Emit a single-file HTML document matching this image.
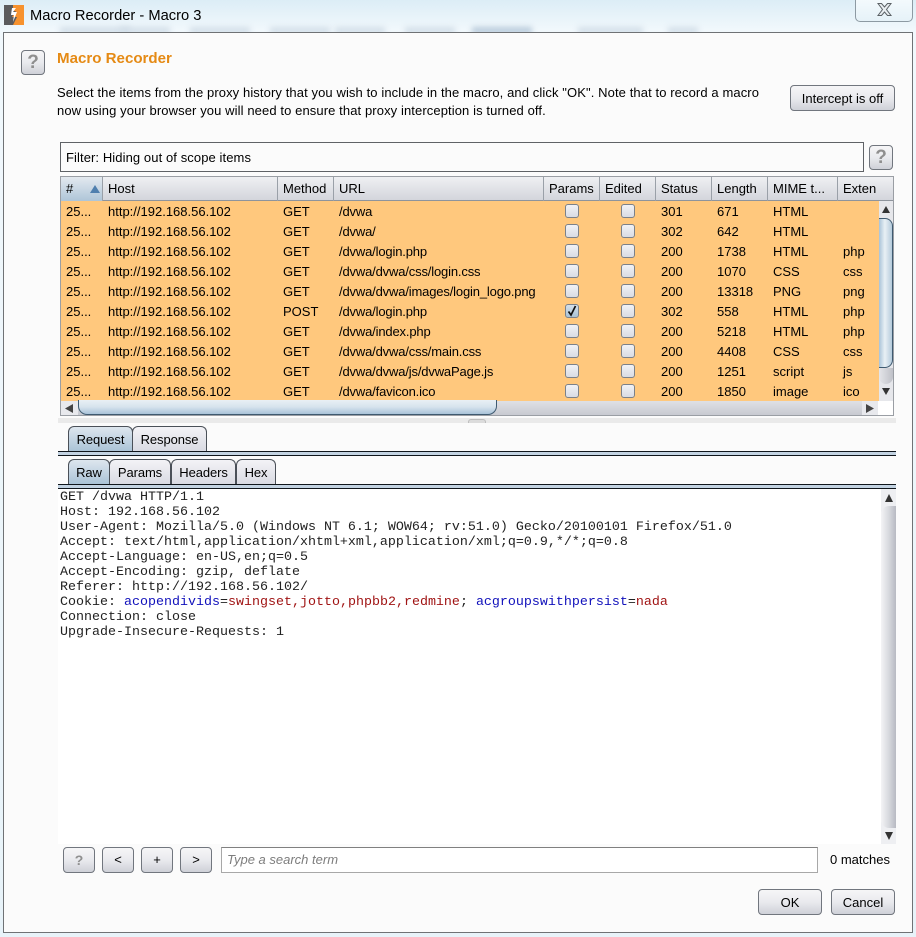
<!DOCTYPE html>
<html><head><meta charset="utf-8"><title>Macro Recorder - Macro 3</title>
<style>
*{box-sizing:border-box}
html,body{margin:0;padding:0}
body{width:916px;height:937px;overflow:hidden;position:relative;background:linear-gradient(#dcedf6 0,#f1f8fc 30px,#e8f3f9 100%);font:13px "Liberation Sans",sans-serif;color:#000}
.a{position:absolute;white-space:nowrap}
.blur{position:absolute;background:#d3dfe9;filter:blur(3px);height:7px}
.btn{position:absolute;border:1px solid #71767e;border-radius:4px;background:linear-gradient(#f6f6f7 0,#e9eaee 50%,#cfd1d8 100%);text-align:center;color:#000;white-space:nowrap}
.q{color:#8f8f8f;font-weight:bold}
.hc{position:absolute;top:0;height:24px;border-right:1px solid #9aa0a8;line-height:23px;padding-left:5px;white-space:nowrap;overflow:hidden}
.row{position:absolute;left:0;height:20px;width:819px;line-height:22px}
.row span{position:absolute;top:0;white-space:nowrap}
.row span.u{letter-spacing:-.16px}
.cb{position:absolute;top:3px;width:14px;height:14px;border:1px solid #7b8189;border-radius:3px;background:linear-gradient(#f1f2f5,#d9dce4)}
.tab{position:absolute;height:26px;border:1px solid #4a5058;border-bottom:0;border-radius:6px 6px 0 0;background:linear-gradient(#f3f3f6,#d8dae2);text-align:center;line-height:25px;letter-spacing:-.1px}
.tab.on{background:linear-gradient(#dde6ee,#a9c2d6)}
.ln{position:absolute;left:58px;width:838px}
.mono{position:absolute;left:60px;font:13.33px/15px "Liberation Mono",monospace;color:#222;white-space:pre}
.sb{position:absolute}
</style></head><body>
<div class="blur" style="left:60px;top:27px;width:70px"></div>
<div class="blur" style="left:120px;top:27px;width:50px"></div>
<div class="blur" style="left:190px;top:27px;width:60px"></div>
<div class="blur" style="left:270px;top:27px;width:60px"></div>
<div class="blur" style="left:335px;top:27px;width:50px"></div>
<div class="blur" style="left:405px;top:27px;width:50px"></div>
<div class="blur" style="left:472px;top:27px;width:60px;background:#b9cbdb"></div>
<div class="blur" style="left:578px;top:27px;width:65px"></div>
<div class="blur" style="left:668px;top:27px;width:30px"></div>

<svg class="a" style="left:4px;top:5px" width="20" height="20" viewBox="0 0 20 20"><rect width="20" height="20" fill="#5b5b5d"/><path d="M9 0H20V20H9L13 12H8L12 6H9Z" fill="#f7922e"/><path d="M8 3L12 3 9 7 13 7 9 17 10 10 7 10Z" fill="#fff"/></svg>
<div class="a" style="left:30px;top:7px;font-size:14.7px;line-height:18px;color:#000">Macro Recorder - Macro 3</div>

<div class="a" style="left:855px;top:-2px;width:58px;height:24px;border:1px solid #8d9aa3;border-radius:0 0 5px 5px;background:linear-gradient(#f4fafd,#e6f2f8)"></div>
<svg class="a" style="left:876px;top:2px" width="17" height="15" viewBox="0 0 17 15"><path d="M2 1.500H5.500L8.500 5 11.500 1.500H15L10.500 7.500 15 13.500H11.500L8.500 10 5.500 13.500H2L6.500 7.500Z" fill="#e9eef1" stroke="#5b6165" stroke-width="1"/></svg>

<div class="a" style="left:3px;top:32px;width:910px;height:901px;background:#fbfbfb;border:1px solid #6f7275"></div>

<div class="btn q" style="left:21px;top:50px;width:24px;height:25px;font-size:19px;line-height:24px">?</div>
<div class="a" style="left:57px;top:50px;font-size:15.1px;font-weight:bold;color:#e58a14;line-height:18px">Macro Recorder</div>
<div class="a" style="left:57px;top:84px;line-height:18px;letter-spacing:.1px">Select the items from the proxy history that you wish to include in the macro, and click "OK". Note that to record a macro<br>now using your browser you will need to ensure that proxy interception is turned off.</div>
<div class="btn" style="left:790px;top:85px;width:105px;height:26px;line-height:25px">Intercept is off</div>

<div class="a" style="left:60px;top:142px;width:804px;height:30px;border:1px solid #5f6266;background:#fbfbfb;line-height:29px;padding-left:5px;letter-spacing:.09px">Filter: Hiding out of scope items</div>
<div class="btn q" style="left:869px;top:145px;width:24px;height:25px;font-size:19px;line-height:24px">?</div>

<!-- table -->
<div class="a" style="left:60px;top:176px;width:834px;height:240px;border:1px solid #9a9ea4;background:#fff"></div>
<div class="a" style="left:61px;top:177px;width:832px;height:24px;background:linear-gradient(#eff0f3,#d3d5dc);border-bottom:1px solid #8e949c">
<div class="hc" style="left:0;width:42px;background:linear-gradient(#e3e9ef,#aec5d8)">#</div>
<svg class="a" style="left:29px;top:8px" width="10" height="8"><path d="M5 0L10 8H0Z" fill="#4f7fae"/></svg>
<div class="hc" style="left:42px;width:175px">Host</div>
<div class="hc" style="left:217px;width:56px">Method</div>
<div class="hc" style="left:273px;width:210px">URL</div>
<div class="hc" style="left:483px;width:56px">Params</div>
<div class="hc" style="left:539px;width:56px">Edited</div>
<div class="hc" style="left:595px;width:56px">Status</div>
<div class="hc" style="left:651px;width:56px">Length</div>
<div class="hc" style="left:707px;width:70px">MIME t...</div>
<div class="hc" style="left:777px;width:55px;border-right:0">Exten</div>
</div>

<div class="a" style="left:61px;top:201px;width:819px;height:200px;background:#ffc87d;overflow:hidden" id="t">
<div class="row" style="top:0"><span style="left:5px">25...</span><span style="left:47px">http://192.168.56.102</span><span style="left:222px">GET</span><span class="u" style="left:278px">/dvwa</span><i class="cb" style="left:504px"></i><i class="cb" style="left:560px"></i><span style="left:600px">301</span><span style="left:656px">671</span><span style="left:712px">HTML</span></div>
<div class="row" style="top:20px"><span style="left:5px">25...</span><span style="left:47px">http://192.168.56.102</span><span style="left:222px">GET</span><span class="u" style="left:278px">/dvwa/</span><i class="cb" style="left:504px"></i><i class="cb" style="left:560px"></i><span style="left:600px">302</span><span style="left:656px">642</span><span style="left:712px">HTML</span></div>
<div class="row" style="top:40px"><span style="left:5px">25...</span><span style="left:47px">http://192.168.56.102</span><span style="left:222px">GET</span><span class="u" style="left:278px">/dvwa/login.php</span><i class="cb" style="left:504px"></i><i class="cb" style="left:560px"></i><span style="left:600px">200</span><span style="left:656px">1738</span><span style="left:712px">HTML</span><span style="left:782px">php</span></div>
<div class="row" style="top:60px"><span style="left:5px">25...</span><span style="left:47px">http://192.168.56.102</span><span style="left:222px">GET</span><span class="u" style="left:278px">/dvwa/dvwa/css/login.css</span><i class="cb" style="left:504px"></i><i class="cb" style="left:560px"></i><span style="left:600px">200</span><span style="left:656px">1070</span><span style="left:712px">CSS</span><span style="left:782px">css</span></div>
<div class="row" style="top:80px"><span style="left:5px">25...</span><span style="left:47px">http://192.168.56.102</span><span style="left:222px">GET</span><span class="u" style="left:278px">/dvwa/dvwa/images/login_logo.png</span><i class="cb" style="left:504px"></i><i class="cb" style="left:560px"></i><span style="left:600px">200</span><span style="left:656px">13318</span><span style="left:712px">PNG</span><span style="left:782px">png</span></div>
<div class="row" style="top:100px"><span style="left:5px">25...</span><span style="left:47px">http://192.168.56.102</span><span style="left:222px">POST</span><span class="u" style="left:278px">/dvwa/login.php</span><i class="cb" style="left:504px;background:linear-gradient(#d5e0ea,#a9c2d6)"><svg style="position:absolute;left:0;top:0" width="12" height="12"><path d="M2.500 6.500L5 10 9.500 1" fill="none" stroke="#111" stroke-width="1.700"/></svg></i><i class="cb" style="left:560px"></i><span style="left:600px">302</span><span style="left:656px">558</span><span style="left:712px">HTML</span><span style="left:782px">php</span></div>
<div class="row" style="top:120px"><span style="left:5px">25...</span><span style="left:47px">http://192.168.56.102</span><span style="left:222px">GET</span><span class="u" style="left:278px">/dvwa/index.php</span><i class="cb" style="left:504px"></i><i class="cb" style="left:560px"></i><span style="left:600px">200</span><span style="left:656px">5218</span><span style="left:712px">HTML</span><span style="left:782px">php</span></div>
<div class="row" style="top:140px"><span style="left:5px">25...</span><span style="left:47px">http://192.168.56.102</span><span style="left:222px">GET</span><span class="u" style="left:278px">/dvwa/dvwa/css/main.css</span><i class="cb" style="left:504px"></i><i class="cb" style="left:560px"></i><span style="left:600px">200</span><span style="left:656px">4408</span><span style="left:712px">CSS</span><span style="left:782px">css</span></div>
<div class="row" style="top:160px"><span style="left:5px">25...</span><span style="left:47px">http://192.168.56.102</span><span style="left:222px">GET</span><span class="u" style="left:278px">/dvwa/dvwa/js/dvwaPage.js</span><i class="cb" style="left:504px"></i><i class="cb" style="left:560px"></i><span style="left:600px">200</span><span style="left:656px">1251</span><span style="left:712px">script</span><span style="left:782px">js</span></div>
<div class="row" style="top:180px"><span style="left:5px">25...</span><span style="left:47px">http://192.168.56.102</span><span style="left:222px">GET</span><span class="u" style="left:278px">/dvwa/favicon.ico</span><i class="cb" style="left:504px"></i><i class="cb" style="left:560px"></i><span style="left:600px">200</span><span style="left:656px">1850</span><span style="left:712px">image</span><span style="left:782px">ico</span></div>
</div>

<!-- table v scrollbar -->
<div class="sb" style="left:879px;top:201px;width:14px;height:200px;background:#e6e7eb"></div>
<div class="a" style="left:879px;top:218px;width:14px;height:150px;background:linear-gradient(90deg,#a8c3d8,#e9f0f5 45%,#b5cbdc);border:1px solid #3f5a70;border-left:0;border-radius:0 8px 8px 0"></div>
<div class="a" style="left:879px;top:368px;width:14px;height:16px;background:linear-gradient(90deg,#e4e5e9,#bfc1c8);border-radius:0 0 8px 8px"></div>
<svg class="a" style="left:881px;top:205px" width="10" height="8"><path d="M5 1L9 8H1Z" fill="#333"/></svg>
<svg class="a" style="left:881px;top:387px" width="10" height="8"><path d="M5 8L9 1H1Z" fill="#333"/></svg>

<!-- table h scrollbar -->
<div class="a" style="left:61px;top:401px;width:817px;height:14px;background:linear-gradient(#dfe0e5,#c8cad1)"></div>
<div class="a" style="left:61px;top:401px;width:17px;height:14px;background:#e8e9ed"></div>
<div class="a" style="left:78px;top:400px;width:419px;height:15px;background:linear-gradient(#e9f0f5,#d6e3ed 50%,#a9c3d8);border:1px solid #3f5a70;border-top:0;border-radius:0 0 9px 9px"></div>
<div class="a" style="left:862px;top:401px;width:16px;height:14px;background:#e8e9ed"></div>
<svg class="a" style="left:65px;top:404px" width="8" height="9"><path d="M0 4.500L8 0V9Z" fill="#444"/></svg>
<svg class="a" style="left:866px;top:404px" width="8" height="9"><path d="M8 4.500L0 0V9Z" fill="#444"/></svg>

<!-- splitter -->
<div class="a" style="left:58px;top:418px;width:838px;height:5px;background:#eaeaea"></div>
<div class="a" style="left:468px;top:419px;width:18px;height:4px;border:1px solid #bdbdbd;border-bottom:0;border-radius:3px 3px 0 0;background:#dcdcdc"></div>

<!-- tabs 1 -->
<div class="tab on" style="left:68px;top:426px;width:65px">Request</div>
<div class="tab" style="left:132px;top:426px;width:75px">Response</div>
<div class="ln" style="top:451px;height:5px;background:#c3d3e2;border-top:1px solid #10161c;border-bottom:1px solid #10161c"></div>

<!-- tabs 2 -->
<div class="tab on" style="left:68px;top:459px;width:42px">Raw</div>
<div class="tab" style="left:109px;top:459px;width:62px">Params</div>
<div class="tab" style="left:171px;top:459px;width:65px">Headers</div>
<div class="tab" style="left:236px;top:459px;width:40px">Hex</div>
<div class="ln" style="top:484px;height:5px;background:#c3d3e2;border-top:1px solid #10161c;border-bottom:1px solid #10161c"></div>

<!-- text -->
<div class="a" style="left:58px;top:489px;width:838px;height:355px;background:#fff"></div>
<div class="mono" style="top:490px">GET /dvwa HTTP/1.1
Host: 192.168.56.102
User-Agent: Mozilla/5.0 (Windows NT 6.1; WOW64; rv:51.0) Gecko/20100101 Firefox/51.0
Accept: text/html,application/xhtml+xml,application/xml;q=0.9,*/*;q=0.8
Accept-Language: en-US,en;q=0.5
Accept-Encoding: gzip, deflate
Referer: http://192.168.56.102/
Cookie: <span style="color:#1111bb">acopendivids</span>=<span style="color:#a01414">swingset,jotto,phpbb2,redmine</span>; <span style="color:#1111bb">acgroupswithpersist</span>=<span style="color:#a01414">nada</span>
Connection: close
Upgrade-Insecure-Requests: 1</div>

<div class="sb" style="left:881px;top:489px;width:15px;height:355px;background:#eeeff2"></div>
<div class="a" style="left:881px;top:506px;width:15px;height:322px;background:linear-gradient(90deg,#f4f4f6,#d8dadf 50%,#b8bac2);border-radius:8px 0 0 8px"></div>
<svg class="a" style="left:884px;top:493px" width="10" height="9"><path d="M5 1L9 9H1Z" fill="#333"/></svg>
<svg class="a" style="left:884px;top:831px" width="10" height="9"><path d="M5 9L9 1H1Z" fill="#333"/></svg>

<!-- search -->
<div class="btn q" style="left:63px;top:847px;width:32px;height:26px;font-size:14px;line-height:25px">?</div>
<div class="btn" style="left:102px;top:847px;width:32px;height:26px;line-height:24px">&lt;</div>
<div class="btn" style="left:141px;top:847px;width:32px;height:26px;line-height:24px">+</div>
<div class="btn" style="left:180px;top:847px;width:32px;height:26px;line-height:24px">&gt;</div>
<div class="a" style="left:221px;top:847px;width:597px;height:26px;border:1px solid #a8a8a8;border-top-color:#808080;background:#fff;padding-left:5px;line-height:24px;font-style:italic;color:#7d7d7d">Type a search term</div>
<div class="a" style="left:830px;top:852px;line-height:16px">0 matches</div>

<div class="btn" style="left:758px;top:889px;width:64px;height:26px;line-height:25px">OK</div>
<div class="btn" style="left:831px;top:889px;width:64px;height:26px;line-height:25px">Cancel</div>
</body></html>
